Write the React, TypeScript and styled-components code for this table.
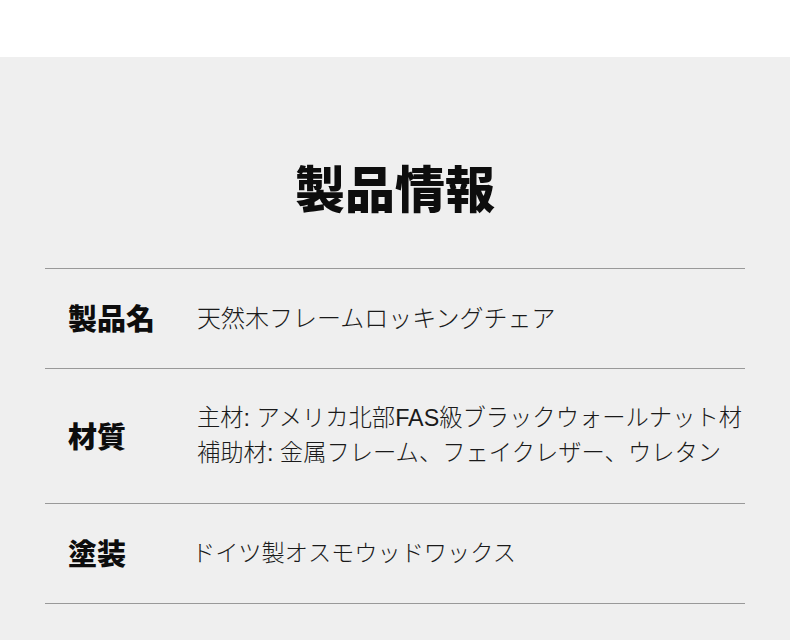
import styled, { createGlobalStyle } from 'styled-components';

const GlobalStyle = createGlobalStyle`
  body {
    margin: 0;
    background: #ffffff;
    font-family: "Noto Sans CJK JP", "Noto Sans", sans-serif;
  }
`;

const TopBand = styled.div`
  height: 57px;
  background: #ffffff;
`;

const Section = styled.section`
  background: #efefef;
  padding: 95px 45px 40px;
`;

const Title = styled.h2`
  margin: 0 0 47px;
  font-size: 50px;
  line-height: 69px;
  font-weight: 900;
  color: #0d0d0d;
  text-align: center;
`;

const Table = styled.div`
  border-bottom: 1px solid #999;
`;

const Row = styled.div`
  display: grid;
  grid-template-columns: 129px 1fr;
  align-items: center;
  padding: 32px 0 32px 23px;
  border-top: 1px solid #999;
`;

const Label = styled.div`
  font-size: 29px;
  line-height: 35px;
  font-weight: 900;
  color: #0d0d0d;
  transform: translateY(-1px);
`;

const Value = styled.div<{ $shift?: number; $size?: number }>`
  margin-left: ${(p) => p.$shift ?? 0}px;
  font-family: "Liberation Sans", "Noto Sans CJK JP", sans-serif;
  font-size: ${(p) => p.$size ?? 24}px;
  line-height: 35px;
  font-weight: 300;
  color: #1a1a1a;
  white-space: nowrap;
`;

const rows = [
  { label: '製品名', lines: ['天然木フレームロッキングチェア'], size: 24 },
  {
    label: '材質',
    lines: ['主材: アメリカ北部FAS級ブラックウォールナット材', '補助材: 金属フレーム、フェイクレザー、ウレタン'],
    size: 23.3,
  },
  { label: '塗装', lines: ['ドイツ製オスモウッドワックス'], shift: -5, size: 23.2 },
];

export default function App() {
  return (
    <>
      <GlobalStyle />
      <TopBand />
      <Section>
        <Title>製品情報</Title>
        <Table>
          {rows.map((r) => (
            <Row key={r.label}>
              <Label>{r.label}</Label>
              <Value $shift={r.shift} $size={r.size}>
                {r.lines.map((l) => (
                  <div key={l}>{l}</div>
                ))}
              </Value>
            </Row>
          ))}
        </Table>
      </Section>
    </>
  );
}
